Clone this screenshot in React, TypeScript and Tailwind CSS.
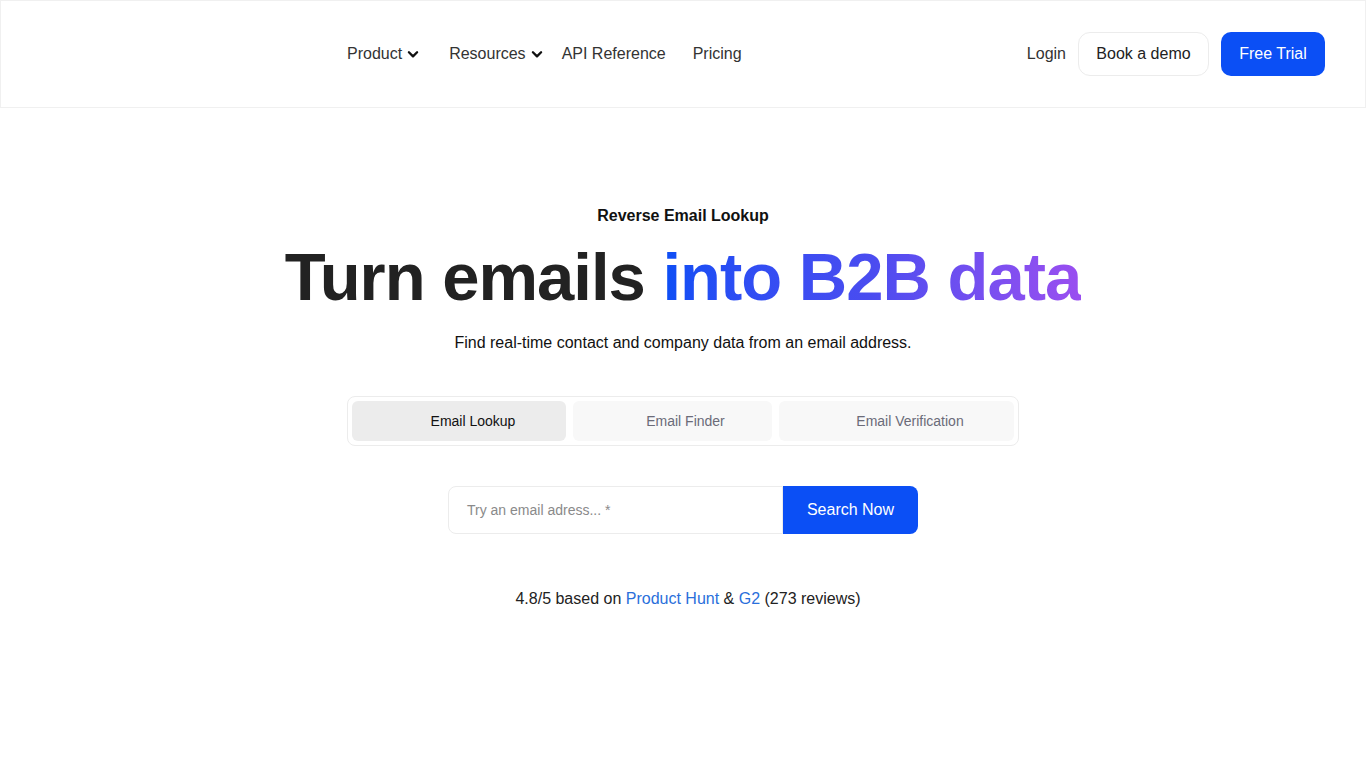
const font = { fontFamily: '"Liberation Sans", Arial, sans-serif' };

function Chevron() {
  return (
    <svg width="14" height="14" viewBox="0 0 24 24" fill="none" stroke="currentColor" strokeWidth="4" strokeLinecap="round" strokeLinejoin="round" className="text-[#111]">
      <path d="M5 9l7 7 7-7" />
    </svg>
  );
}

export default function App() {
  return (
    <div className="min-h-[768px] bg-white text-[#222]" style={font}>
      {/* Header */}
      <header className="h-[108px] border border-[#f0f0f0] flex items-center pl-[346px] pr-[40px]">
        <nav className="flex items-center text-[16px] text-[#333]">
          <span className="flex items-center gap-1">Product <Chevron /></span>
          <span className="flex items-center gap-1 ml-[29px]">Resources <Chevron /></span>
          <span className="ml-[18px]">API Reference</span>
          <span className="ml-[27px]">Pricing</span>
        </nav>
        <div className="ml-auto flex items-center">
          <span className="text-[16px] text-[#333]">Login</span>
          <button className="ml-[12px] h-[44px] w-[131px] rounded-xl border border-[#ececec] bg-white text-[16px] text-[#222]">
            Book a demo
          </button>
          <button className="ml-[12px] h-[44px] w-[104px] rounded-[10px] bg-[#0b4ff5] text-[16px] text-white">
            Free Trial
          </button>
        </div>
      </header>

      {/* Hero */}
      <main className="flex flex-col items-center pt-[98px]">
        <p className="text-[16px] font-bold text-[#111] leading-[19px]">Reverse Email Lookup</p>
        <h1 className="mt-[12px] text-[67px] font-bold leading-[80px] tracking-[-1px] text-[#222]">
          Turn emails{" "}
          <span className="bg-gradient-to-r from-[#0a4ef5] via-[#4a4cf0] to-[#9a4ef0] bg-clip-text text-transparent">
            into B2B data
          </span>
        </h1>
        <p className="mt-[14px] text-[16px] text-[#111]">Find real-time contact and company data from an email address.</p>

        {/* Tabs */}
        <div className="mt-[41px] w-[672px] h-[50px] rounded-lg border border-[#ececec] p-[4px] flex gap-[7px]">
          <button className="w-[214px] pl-[28px] rounded-md bg-[#ececec] text-[14px] text-[#111]">Email Lookup</button>
          <button className="w-[199px] pl-[26px] rounded-md bg-[#f8f8f8] text-[14px] text-[#6b6b78]">Email Finder</button>
          <button className="flex-1 pl-[27px] rounded-md bg-[#f8f8f8] text-[14px] text-[#6b6b78]">Email Verification</button>
        </div>

        {/* Search */}
        <div className="mt-[40px] flex h-[48px]">
          <div className="w-[335px] rounded-l-lg border border-[#ececec] flex items-center pl-[18px]">
            <span className="text-[14px] text-[#8a8a8a]">Try an email adress... *</span>
          </div>
          <button className="w-[135px] rounded-r-lg bg-[#0b4ff5] text-[16px] text-white">Search Now</button>
        </div>

        <p className="mt-[53px] pl-[10px] text-[16px] text-[#222]">
          4.8/5 based on <span className="text-[#2a6fdb]">Product Hunt</span> &amp;{" "}
          <span className="text-[#2a6fdb]">G2</span> (273 reviews)
        </p>
      </main>
    </div>
  );
}
